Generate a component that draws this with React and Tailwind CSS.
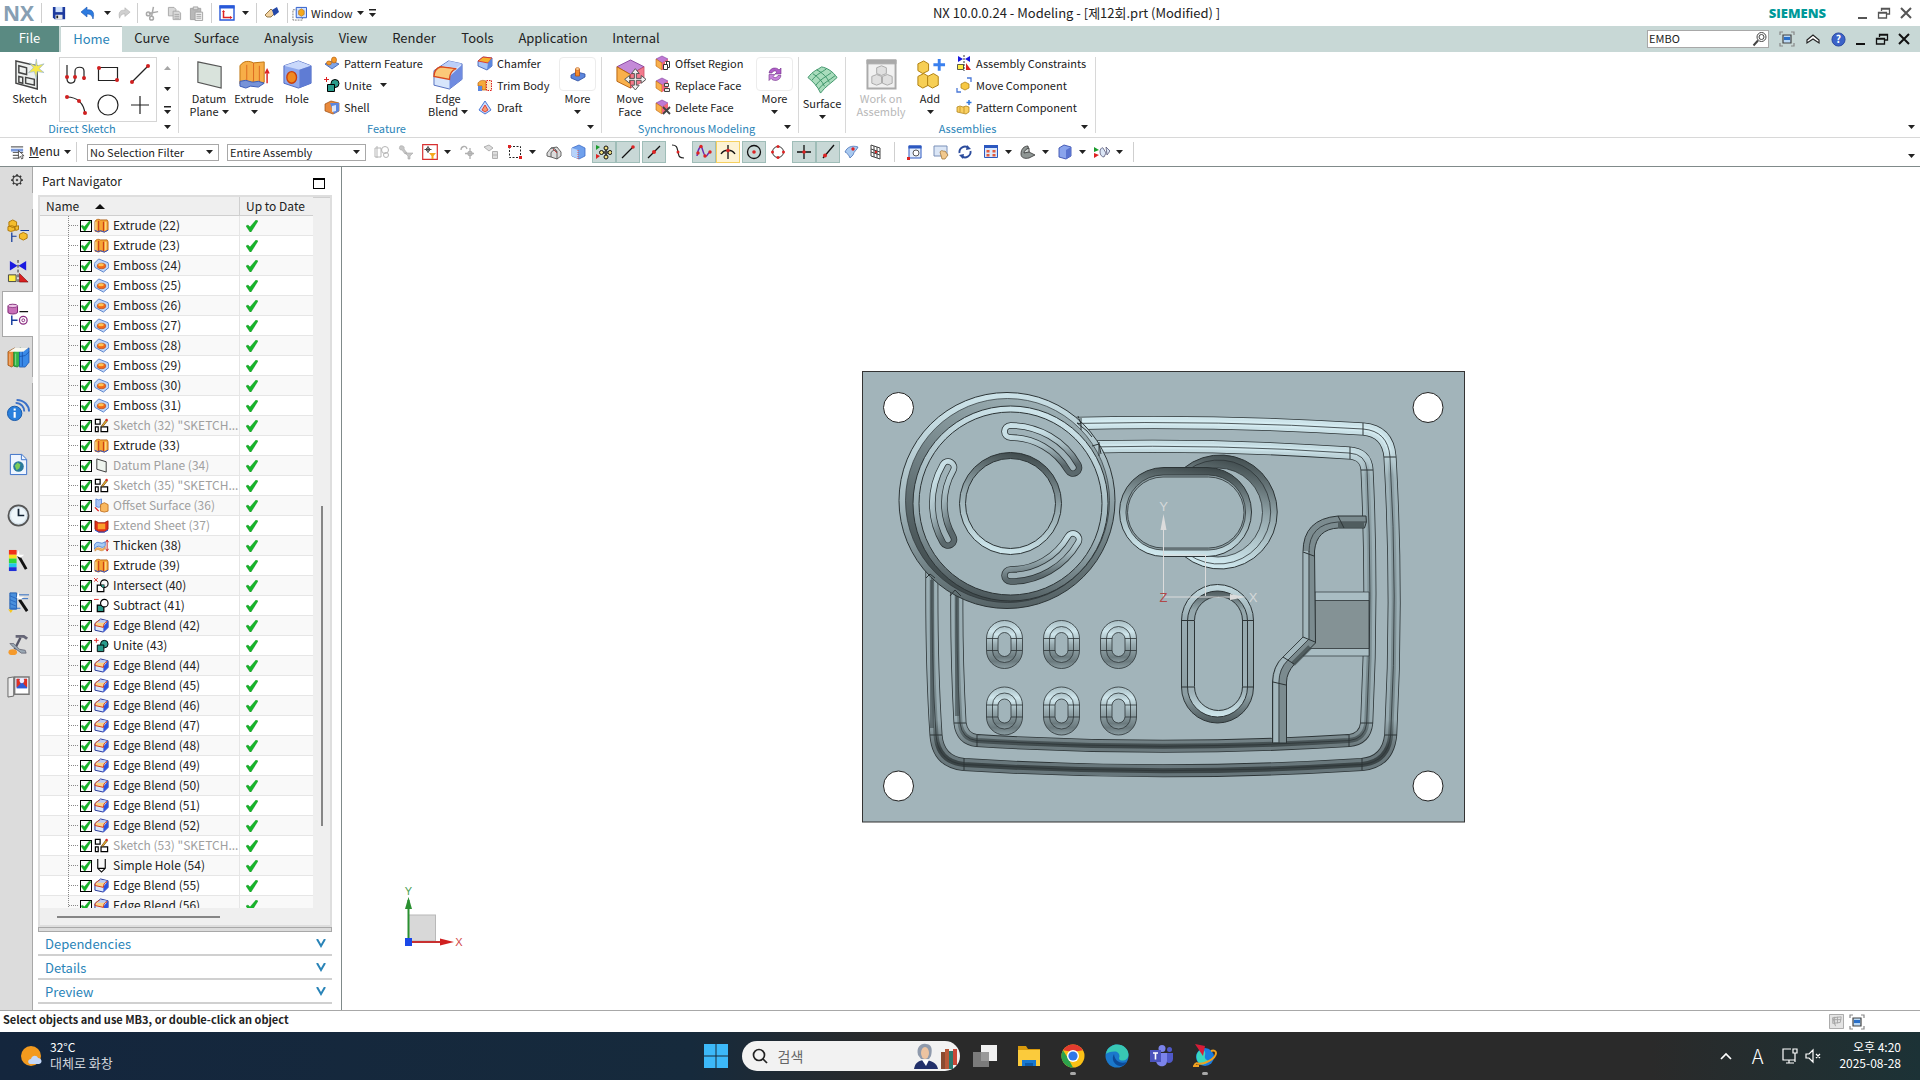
import { Fragment } from 'react'

const BLUE = '#4a78d8'

// 16x16 drawings
const small = {
  save: (
    <>
      <path d="M1 1h14v14H3l-2-2z" fill="#1d3a9e" />
      <path d="M4 1h8v6H4z" fill="#cfe0fa" />
      <path d="M4 10h8v5H4z" fill="#e8e8e8" />
      <path d="M5 11h2v3H5z" fill="#222" />
    </>
  ),
  undo: <path d="M1 7l6-5v3c5-1 8 2 6 9-1-4-3-5-6-5v3z" fill="#2d7be0" stroke="#1c56b0" strokeWidth=".6" />,
  redo: <path d="M15 7L9 2v3C4 4 1 7 3 14c1-4 3-5 6-5v3z" fill="#cfcfcf" stroke="#aaa" strokeWidth=".6" />,
  cut: (
    <g fill="none" stroke="#a9a9a9" strokeWidth="1.6">
      <path d="M9 1L7 11M14 6L4 8" />
      <circle cx="3.5" cy="8.500" r="2" />
      <circle cx="7" cy="13" r="2" />
    </g>
  ),
  copy: (
    <g fill="#d9d9d9" stroke="#a9a9a9">
      <path d="M1.500 1.500h6l2 2v7h-8z" />
      <path d="M6.500 5.500h6l2 2v7h-8z" />
      <path d="M8 9h5M8 11h5M8 13h5" />
    </g>
  ),
  paste: (
    <g stroke="#a3a3a3">
      <path d="M1.500 2.500h11v12h-11z" fill="#b9b9b9" />
      <path d="M4.500 1h5v3h-5z" fill="#ddd" />
      <path d="M6.500 6.500h8v9h-8z" fill="#eee" />
      <path d="M8 9h5M8 11h5M8 13h5" />
    </g>
  ),
  orient: (
    <>
      <path d="M1 1h14v14H1z" fill="#fff" stroke="#2858d8" strokeWidth="1.400" />
      <path d="M.5.5h15v3H.5z" fill="#2858d8" />
      <path d="M4.500 6v6.500H12" fill="none" stroke="#d22" strokeWidth="1.500" />
      <path d="M3 7l1.500-2L6 7zM11 11l2.500 1.500L11 14z" fill="#d22" />
    </>
  ),
  wand: (
    <>
      <path d="M1 10l6-6 4 4-4 4H3z" fill="#f3d3a0" stroke="#7a5a2a" strokeWidth=".8" />
      <path d="M8 5l5-3 2 5-5 4z" fill="#2448a8" />
    </>
  ),
  window: (
    <>
      <path d="M1 4h10v11H1z" fill="none" stroke="#777" strokeDasharray="2 1" />
      <path d="M4.500 1.500h11v11h-11z" fill="#cfe0ff" stroke="#2858c8" />
      <path d="M7 5l3-2 3 2v4l-3 2-3-2z" fill="#f5a81c" stroke="#a8690a" strokeWidth=".6" />
    </>
  ),
  fit: (
    <>
      <path d="M1 4V1h3M12 1h3v3M15 12v3h-3M4 15H1v-3" fill="none" stroke="#888" strokeWidth="1.200" />
      <path d="M4 4h8v8H4z" fill="#b9d8f5" stroke="#444" strokeWidth="1.200" />
      <path d="M5 6h6v3H5z" fill="#2a6fc8" />
    </>
  ),
  help: (
    <>
      <circle cx="8" cy="8" r="7" fill="#3c63c8" stroke="#2a48a0" />
      <text x="8" y="12" textAnchor="middle" fontSize="11" fontWeight="700" fill="#fff">?</text>
    </>
  ),
  up: <path d="M2 9l6-5 6 5v3L8 8l-6 4z" fill="#fff" stroke="#222" strokeWidth="1.200" />,
  min: <path d="M4 12h9v2H4z" fill="currentColor" />,
  restore: (
    <path d="M5.500 6V3.500h8V9H11M2.500 7.500h8V13h-8zM2.500 8h8M5.500 4h8" fill="none" stroke="currentColor" strokeWidth="1.300" />
  ),
  close: <path d="M3 3l10 10M13 3L3 13" stroke="currentColor" strokeWidth="2" />,
  search: (
    <g fill="none" stroke="#444">
      <circle cx="9.500" cy="6" r="4.500" />
      <circle cx="9.500" cy="6" r="2.500" />
      <path d="M6 9.500L1.500 14.500" strokeWidth="2" />
    </g>
  ),
  menu: (
    <>
      <path d="M1 2h13M3 8h11M3 11h8M3 14h7" stroke="#666" strokeWidth="1.200" />
      <path d="M1 4h13v3H1z" fill="#7a98d8" />
      <path d="M9 6v8l2-2 1.500 3 1.500-1-1.500-2.500H15z" fill="#fff" stroke="#333" strokeWidth=".8" />
    </>
  ),
  pattern: (
    <>
      <path d="M1 9l7-3 7 3-7 5z" fill="#7fa4e6" stroke="#3458b0" strokeWidth=".8" />
      <ellipse cx="5" cy="8" rx="2.500" ry="2" fill="#f59a2c" stroke="#b8630e" strokeWidth=".7" />
      <ellipse cx="10" cy="5" rx="2.500" ry="3" fill="#f59a2c" stroke="#b8630e" strokeWidth=".7" />
    </>
  ),
  unite: (
    <>
      <circle cx="11" cy="6.500" r="4" fill="#2a9c8c" stroke="#000" />
      <path d="M3.500 7.500h7v7h-7z" fill="#2a9c8c" stroke="#000" />
      <path d="M2.500 0v5M0 2.500h5" stroke="#d22" />
    </>
  ),
  subtract: (
    <>
      <path d="M3.500 7.500h7v7h-7z" fill="#2a9c8c" stroke="#000" strokeWidth="1.300" />
      <circle cx="11" cy="5.500" r="4" fill="#fff" stroke="#000" strokeWidth="1.200" />
      <path d="M0 1.500h5" stroke="#d22" />
    </>
  ),
  intersect: (
    <>
      <path d="M3.500 7.500h7v7h-7z" fill="#fff" stroke="#000" strokeWidth="1.300" />
      <circle cx="11" cy="6" r="4" fill="none" stroke="#000" strokeWidth="1.200" />
      <path d="M8 7.500h2.500V10C9 10 8 9 8 7.500z" fill="#2a9c8c" />
      <path d="M0 0l4 4M4 0L0 4" stroke="#d22" />
    </>
  ),
  shell: (
    <>
      <path d="M1 5l6-3 8 2v8l-6 3-8-3z" fill="#e98a3c" stroke="#9a4a0e" strokeWidth=".7" />
      <path d="M6 4l9 0v8l-5 3z" fill="#5c86dd" />
      <path d="M8 7l4-1v6l-4 1z" fill="#d9e5fb" />
    </>
  ),
  chamfer: (
    <>
      <path d="M1 6l5-4 9 1v8l-5 4-9-4z" fill="#a8c4f4" stroke="#3458b0" strokeWidth=".8" />
      <path d="M1 6l5-4 9 1-4 5z" fill="#f5b12c" stroke="#d22" strokeWidth=".8" />
      <path d="M11 8l4-5v8l-5 4z" fill="#5c86dd" />
    </>
  ),
  trim: (
    <>
      <path d="M1 6c2-3 5-3 8-2v9H5V9H1z" fill="#f5a83a" stroke="#b8630e" strokeWidth=".7" />
      <path d="M9.500 3.500h5v10h-5z" fill="#fde9c8" stroke="#d22" strokeDasharray="1.500 1" />
      <path d="M1 9h4v5H1z" fill="#5c86dd" />
    </>
  ),
  draft: (
    <>
      <path d="M8 2l6 9-6 4-6-4z" fill="#cddcf8" stroke={BLUE} />
      <path d="M8 6l3 5-3 2-3-2z" fill="#f59a6c" stroke="#d22" strokeWidth=".8" />
    </>
  ),
  boss: (
    <>
      <path d="M1 9l6-3 8 2v3l-7 4-7-3z" fill="#5c86dd" stroke="#2c4ca0" strokeWidth=".8" />
      <path d="M5.500 3h4v7h-4z" fill="#f58a2c" stroke="#b8530e" strokeWidth=".8" />
      <ellipse cx="7.500" cy="3" rx="2" ry="1.500" fill="#fcc88a" stroke="#b8530e" strokeWidth=".5" />
    </>
  ),
  cycle: (
    <>
      <path d="M2 7c1-6 8-6 10-3l2-2v6H8l2-2C8 4 6 5 5 7z" fill="#b05cc8" stroke="#703088" strokeWidth=".6" />
      <path d="M14 9.500c-1 6-8 6-10 3l-2 2v-6h6l-2 2c2 2 4 1 5-1z" fill="#c884dc" stroke="#703088" strokeWidth=".6" />
    </>
  ),
  offsetRegion: (
    <>
      <path d="M1 4l6-3 6 3-6 4z" fill="#c07ad4" stroke="#8040a0" strokeWidth=".6" />
      <path d="M1 4l6 4v7l-6-4z" fill="#f9b04c" stroke="#b8630e" strokeWidth=".6" />
      <path d="M7 8l6-4v3h-3v7l-3 1z" fill="#f2667a" />
      <path d="M8.500 9.500h4v5h-4zM11.500 7v2M10.500 6.500h4v6h-2" fill="#fff" stroke="#333" />
    </>
  ),
  replaceFace: (
    <>
      <path d="M1 4l6-3 6 3-6 4z" fill="#c07ad4" stroke="#8040a0" strokeWidth=".6" />
      <path d="M1 4l6 4v7l-6-4z" fill="#f9b04c" stroke="#b8630e" strokeWidth=".6" />
      <path d="M7 8l6-4v8l-6 3z" fill="#f2667a" />
      <path d="M9.500 6.500h4v3h-4zM9.500 11.500h5v3h-5z" fill="#eee" stroke="#444" />
    </>
  ),
  deleteFace: (
    <>
      <path d="M1 4l6-3 6 3-6 4z" fill="#c07ad4" stroke="#8040a0" strokeWidth=".6" />
      <path d="M1 4l6 4v7l-6-4z" fill="#f9b04c" stroke="#b8630e" strokeWidth=".6" />
      <path d="M7 8l6-4v8l-6 3z" fill="#f2667a" />
      <path d="M8 8l7 7M15 8l-7 7" stroke="#444" strokeWidth="1.800" />
    </>
  ),
  constraints: (
    <>
      <path d="M2 1l5 3-5 3zM14 1L9 4l5 3z" fill="#1a1ae0" />
      <path d="M1.500 9.500h6v5h-6z" fill="#ffee44" stroke="#333" strokeWidth=".8" />
      <path d="M10 8l5 7h-5z" fill="#d82020" />
      <path d="M8 0v16" stroke="#333" strokeDasharray="2 1" />
    </>
  ),
  moveComp: (
    <>
      <path d="M5 7l4-2 4 2v4l-4 2-4-2z" fill="#f7c843" stroke="#a8780a" strokeWidth=".7" />
      <path d="M11 1h4v4M1 11v4h4" fill="none" stroke={BLUE} strokeWidth="1.300" />
    </>
  ),
  patternComp: (
    <>
      <path d="M1 8l3-1 3 1 3-1 3 1v5l-3 2-9-2z" fill="#f9cf62" stroke="#a8780a" strokeWidth=".7" />
      <path d="M4 8v5M8 8v6" stroke="#a8780a" strokeWidth=".6" />
      <path d="M13 1v5M10.500 3.500h5" stroke="#2f78e0" strokeWidth="1.500" />
    </>
  ),
  // part navigator
  extrude: (
    <>
      <path d="M1 4c1-3 4-3 6-2l7 0 1 2v9l-4 2-4-1-2 1-4-1z" fill="#f7a535" stroke="#a85408" strokeWidth=".8" />
      <path d="M5 3v11M10 4v10" stroke="#c22d10" strokeWidth="1" />
      <path d="M2 4v9M12.500 4v9" stroke="#fbd98c" strokeWidth="1.400" />
      <path d="M1 13l3 1.500 3-1 4 1.500 4-2" fill="none" stroke="#2b50d0" />
    </>
  ),
  emboss: (
    <>
      <path d="M0 6L5 1l10 4 1 5-6 5L1 10z" fill="#c3d9f9" stroke="#4472c4" strokeWidth=".9" />
      <ellipse cx="8" cy="8.500" rx="4.500" ry="3" fill="#f26a1b" stroke="#a83808" strokeWidth=".6" />
      <ellipse cx="7.500" cy="7.200" rx="3" ry="1.700" fill="#ffc050" />
    </>
  ),
  sketch: (
    <>
      <path d="M1.500 1.500h5v5h-5zM1.500 9.500h3v5h-3zM7.500 9.500h7v5h-7z" fill="#fff" stroke="#000" strokeWidth="1.300" />
      <path d="M8 8.500l5-7 1.500 1.500-5 6z" fill="#f5b12c" stroke="#5a3a0a" strokeWidth=".7" />
      <circle cx="13.500" cy="2" r="1.200" fill="#d22" />
    </>
  ),
  plane: <path d="M3 1l10 3v11L3 12z" fill="#eef4ee" stroke="#333" />,
  offsetSurface: (
    <>
      <path d="M2 1l3 1 3-1v8l-3 1-3-1z" fill="#a8c4f4" stroke={BLUE} strokeWidth=".8" />
      <path d="M7 7l4-2 4 2v7l-4 1-4-1z" fill="#f9b860" stroke="#b8630e" strokeWidth=".8" />
      <path d="M1 10l4 4" stroke="#d22" strokeWidth="1.500" />
    </>
  ),
  extendSheet: (
    <>
      <path d="M1 3l4 2h6l4-2v9l-4 3H5l-4-3z" fill="#e23018" stroke="#8a1408" strokeWidth=".8" />
      <path d="M4 6h8v6H4z" fill="#f9a02c" />
      <path d="M1 13l4 2h6l4-2" fill="none" stroke="#2b50d0" />
    </>
  ),
  thicken: (
    <>
      <path d="M0 9c1-4 3-5 6-4s4 0 6-1v4c-2 3-4 2-6 1S2 10 0 12z" fill="#a8ccf4" stroke="#3468c8" strokeWidth=".8" />
      <path d="M1 12c2-2 4-2 6-1s3 1 5-2v2c-2 3-4 3-6 2s-3-1-5 1z" fill="#f9b860" stroke="#b8630e" strokeWidth=".5" />
      <path d="M14 3v10M12.500 4.500L14 2l1.500 2.500M12.500 11.500L14 14l1.500-2.500" fill="none" stroke="#c22" />
    </>
  ),
  blend: (
    <>
      <path d="M1 6l6-5 8 2v7l-5 5-9-2z" fill="#dfe9fb" stroke="#1d2f98" />
      <path d="M10 9l5-6v7l-5 5z" fill="#2f55e0" />
      <path d="M1 8c0-3 2-4 4-5l9 1c-3 1-4 3-4 6z" fill="#fbd58a" stroke="#d0341a" />
      <path d="M2 6l5-4 7 1-3 2-7 0z" fill="#b8ccf6" />
    </>
  ),
  hole: <path d="M4 1v10l4 4 4-4V1M4 11h8" fill="none" stroke="#000" strokeWidth="1.200" />,
  // selection bar
  t1: <g fill="none" stroke="#b5b5b5"><path d="M3 2v12M1 4h6v9H1z" /><circle cx="11" cy="6" r="3.500" /><circle cx="12" cy="11" r="2.500" /></g>,
  t2: <g fill="#c6c6c6" stroke="#aaa" strokeWidth=".6"><path d="M2 2c3-1 5 1 4 3l3 4-2 1-3-4C1 6 1 4 2 2zM7 9h8l-3 3v3h-2v-3z" /></g>,
  t3: (
    <>
      <path d="M.7.700h14.600v14.600H.7z" fill="#fff" stroke="#d83030" strokeWidth="1.200" />
      <path d="M6 2v7M2.500 5.500h7" stroke="#444" />
      <circle cx="6" cy="5.500" r="1.800" fill="none" stroke="#444" />
      <path d="M7 9h7l-2.500 3v3h-2v-3z" fill="#f5a81c" />
    </>
  ),
  t4: <g fill="none" stroke="#b0b0b0" strokeWidth="1.300"><path d="M2 6c0-4 5-5 6-1M11 4v11M6 9.500h9" /><circle cx="11" cy="9.500" r="2" /></g>,
  t5: <g fill="#ddd" stroke="#b0b0b0"><path d="M1 3l5-2 4 3-4 3zM9.500 7.500h5v7h-5zM9.500 11h5" /></g>,
  t6: (
    <>
      <path d="M2.500 2.500h11v11h-11z" fill="none" stroke="#222" strokeDasharray="2 1.500" />
      <path d="M1 1h3v3H1zM12 12h3v3h-3z" fill="#d22" />
    </>
  ),
  t7: <g stroke="#555" strokeWidth=".9"><path d="M1 9l4-5 6-1 4 5v4l-4 3-3-1-3-1-4-1z" fill="#dcdcdc" /><path d="M5 13V9c1-3 5-4 6-1v7M5 4c3 0 5 1 6 4" fill="none" /><path d="M7 5l4 4" stroke="#c33" /></g>,
  t8: <g><path d="M2 4l7-3 6 3v8l-6 3-7-3z" fill="#6fa0ec" stroke="#3e6cc8" strokeWidth=".8" /><path d="M2 4l6 2v9l-6-3z" fill="#b6d2fa" /><path d="M8 6v9" stroke="#e05050" strokeDasharray="1 1" /></g>,
  t9: (
    <>
      <path d="M0 1l4 2-4 3z" fill="#1a9c2c" /><path d="M0 10l4 2-4 3z" fill="#d22" />
      <path d="M10 3v11M4.500 8.500h11" stroke="#111" strokeWidth="1.500" />
      <g fill="#f0e080" stroke="#111"><circle cx="10" cy="4" r="2" /><circle cx="10" cy="13" r="2" /><circle cx="5.500" cy="8.500" r="2" /><circle cx="14" cy="8.500" r="2" /></g>
      <circle cx="10" cy="8.500" r="2" fill="#444" />
    </>
  ),
  t10: <g><path d="M2 14L13 3" stroke="#111" strokeWidth="1.300" /><circle cx="13" cy="3" r="1.800" fill="#d22" /></g>,
  t11: <g><path d="M2 14L14 2" stroke="#111" strokeWidth="1.300" /><circle cx="8" cy="8" r="2" fill="#d22" /></g>,
  t12: <g><path d="M2 1c6 0 5 4 6 7s0 6 6 6" fill="none" stroke="#222" strokeWidth="1.200" /><circle cx="8" cy="8" r="1.500" fill="#d22" /></g>,
  t13: <g><path d="M1 12C2 4 5 1 6 4s2 8 4 8 2-5 5-4" fill="none" stroke="#6a2ab0" strokeWidth="1.500" /><g fill="#d22"><circle cx="2" cy="9" r="1.700" /><circle cx="5" cy="2.500" r="1.700" /><circle cx="9" cy="12" r="1.700" /><circle cx="14" cy="8" r="1.700" /></g></g>,
  t14: <g fill="none" stroke="#111" strokeWidth="1.300"><path d="M1 10c3-5 11-5 14 0M8 1v14" /><circle cx="8" cy="6.500" r="1.800" fill="#d22" stroke="none" /></g>,
  t15: <g><circle cx="8" cy="8" r="6.500" fill="none" stroke="#111" strokeWidth="1.300" /><circle cx="8" cy="8" r="1.800" fill="#d22" /></g>,
  t16: <g><circle cx="8" cy="8" r="5.500" fill="none" stroke="#333" /><g fill="#d22"><circle cx="8" cy="2.500" r="1.500" /><circle cx="8" cy="13.500" r="1.500" /><circle cx="2.500" cy="8" r="1.500" /><circle cx="13.500" cy="8" r="1.500" /></g></g>,
  t17: <g><path d="M8 1v14M1 8h14" stroke="#111" strokeWidth="1.300" /><circle cx="8" cy="8" r="1.800" fill="#d22" /></g>,
  t18: <g><path d="M3 14L14 1" stroke="#111" strokeWidth="1.300" /><circle cx="5" cy="11.500" r="2" fill="#d22" /></g>,
  t19: <g><path d="M1 8c2-5 7-7 13-5-1 3-4 4-5 8l-3 3c-1-3-3-5-5-6z" fill="#a9c9f0" stroke="#4a74b8" strokeWidth=".8" /><circle cx="9" cy="5" r="1.700" fill="#d22" /></g>,
  t20: <g fill="none" stroke="#444"><path d="M3 1l9 3v11l-9-3zM6 2v11M9 3v11M3 5l9 3M3 8l9 3" /><circle cx="8" cy="8" r="1.200" fill="#d22" stroke="none" /></g>,
  t21: <g><path d="M2 2h12v12H2z" fill="#e4eefc" stroke="#2c58c0" /><path d="M1.500 1.500h13v3h-13z" fill="#2c58c0" /><circle cx="9" cy="9" r="3" fill="#fff" stroke="#555" /><path d="M0 13h3v3H0z" fill="#d22" /></g>,
  t22: <g><path d="M1 2h13v10H1z" fill="#dbe6f6" stroke="#7a90b8" /><path d="M7 8c2-3 3 0 5-1l3 4-3 4H9z" fill="#f2c98e" stroke="#9a6c2a" strokeWidth=".7" /></g>,
  t23: <g fill="none" stroke="#2c4c9c" strokeWidth="1.900"><path d="M2.500 9a5.500 5.500 0 0 1 9-5M13.500 7a5.500 5.500 0 0 1-9 5" /><path d="M10 1l4 4-5 1zM6 15l-4-4 5-1z" fill="#2c4c9c" stroke="none" /></g>,
  t24: <g><path d="M1.500 2.500h13v11h-13z" fill="#dce8fa" stroke="#2c58c0" /><path d="M1 1h14v3H1z" fill="#2c58c0" /><path d="M3.500 6h3v2.500h-3zM9.500 6h3v2.500h-3zM3.500 10h3v2.500h-3zM9.500 10h3v2.500h-3z" fill="#e25a3c" /></g>,
  t25: <g stroke="#333" strokeWidth=".8"><path d="M1 10c0-5 3-8 7-8l1 6 6 3-6 3c-4 1-8 0-8-4z" fill="#8f9694" /><path d="M4 9c0-2 2-4 5-5v4z" fill="#cfd5d3" /></g>,
  t26: <g><path d="M2 4l5-3 7 2v9l-5 3-7-2z" fill="#8aa4ec" stroke="#3a50b0" strokeWidth=".9" /><path d="M9 6l5-3v9l-5 3z" fill="#5a74d0" /></g>,
  t27: <g><path d="M0 3l5 3-5 2z" fill="#1a9c2c" /><path d="M0 9l5 2-5 3z" fill="#d22" /><path d="M6 8c0-3 2-5 3-4l3 5-2 4c-2 0-4-2-4-5zM12 3l4 4-3 4z" fill="#dbe6f6" stroke="#557" strokeWidth=".8" /></g>,
  flag: <g fill="#e4e4e4" stroke="#a5a5a5"><path d="M.5.500h15v15H.5z" /><path d="M4 4l9-1-1 6-8 1zM6 3v8M9 3v7M4 6h9M4 4l3 9" fill="none" /></g>,
}

// 32x32 drawings
const big = {
  sketch: (
    <g fill="none" stroke="#444" strokeWidth="1.500">
      <path d="M2 2l22 5v24L2 25z" fill="#eef1ef" />
      <path d="M5 7l8 2v7l-8-2zM5 18l4 1v6l-4-1zM12 19l9 2v6l-9-2z" />
      <path d="M23 0l1 7 7-2-5 5 5 4-7-1-1 7-2-7-6 1 5-5-4-5 6 3z" fill="#f7e94a" stroke="#98b8d0" strokeWidth=".7" />
    </g>
  ),
  plane: <path d="M4 3l24 5v22L4 24z" fill="#d9e3dc" stroke="#555" strokeWidth="1.200" />,
  extrude: (
    <>
      <path d="M1 7c4-6 10-5 14-3l11-1v21l-6 2-6-3-3 4-10-1z" fill="#f7ae48" stroke="#c07510" />
      <path d="M15 4v19M8 6v21M21 7v18" stroke="#dc6a20" />
      <path d="M1 23l6-1 7 2 6-1 6 2-6 4-8-1-5 2-6-2z" fill="#7793d8" stroke="#3c5cb8" />
      <path d="M29 25V13M27 15l2-4 2 4" fill="none" stroke="#d22" strokeWidth="1.500" />
    </>
  ),
  hole: (
    <>
      <path d="M2 7l15-5 13 5v18l-13 5-15-5z" fill="#8fa8ec" stroke="#4d68c0" />
      <path d="M2 7l15-5 13 5-12 4z" fill="#c9d8fb" />
      <path d="M18 11l12-4v18l-12 5z" fill="#5f7cd4" />
      <ellipse cx="10" cy="19" rx="5" ry="6" fill="#f08a20" stroke="#c8400e" strokeWidth="1.400" />
    </>
  ),
  blend: (
    <>
      <path d="M1 12L16 2l14 3v16L17 31 1 27z" fill="#d7e5fb" stroke="#5570c0" />
      <path d="M17 18L30 6v15L17 31z" fill="#6f8be0" />
      <path d="M1 18c0-7 4-9 7-10l16 2c-5 2-7 5-7 11z" fill="#fbc878" stroke="#d9481c" strokeWidth="1.400" />
      <path d="M9 7l8-5 13 3-6 4z" fill="#bccff8" />
    </>
  ),
  move: (
    <>
      <path d="M2 8L16 1l14 7-14 8z" fill="#c48ad8" stroke="#8a4aa4" />
      <path d="M2 8l14 8v14L2 23z" fill="#f9b04c" stroke="#b8630e" />
      <path d="M16 16l14-8v15l-14 7z" fill="#f27a8c" stroke="#b83850" strokeWidth=".6" />
      <path d="M21 10l4 5h-3v5h5v-3l5 4-5 4v-3h-5v5h3l-4 5-4-5h3v-5h-5v3l-5-4 5-4v3h5v-5h-3z" fill="#f2f2f2" stroke="#555" />
    </>
  ),
  surface: (
    <>
      <path d="M1 14c5-7 10-8 14-11 6 1 12 5 16 11-5 5-12 9-17 16-3-7-8-12-13-16z" fill="#a9dcbc" stroke="#3c9468" />
      <path d="M5 17C10 10 15 9 20 5M9 22c4-6 11-9 16-13M12 26c4-6 11-9 17-14M6 10c5 3 10 8 12 13M10 6c6 3 11 8 13 13" fill="none" stroke="#3c9468" />
    </>
  ),
  work: (
    <g stroke="#aaa">
      <path d="M1.500 1.500h29v29h-29z" fill="#f1f1f1" strokeWidth="2" />
      <path d="M1 1h30v4H1z" fill="#aaa" />
      <path d="M11 9l5-2 5 2v6l-5 2-5-2zM6 18l5-2 5 2v7l-5 2-5-2zM17 18l5-2 5 2v7l-5 2-5-2z" fill="#e0e0e0" />
    </g>
  ),
  add: (
    <>
      <g fill="#f7cf55" stroke="#b08010">
        <path d="M3 5l6-3 5 3v7l-6 3-5-3zM3 18l6-3 5 3v9l-6 3-5-3z" />
        <path d="M13 18l6-3 5 3v9l-6 3-5-3z" />
      </g>
      <path d="M25 0v12M19 6h12" stroke="#3a80ee" strokeWidth="3" />
    </>
  ),
}

// 24x24 drawings for the resource bar
const rail = {
  gear: <g fill="none" stroke="#333"><circle cx="12" cy="12" r="7" strokeWidth="2" /><circle cx="12" cy="12" r="1.500" fill="#333" /><path d="M12 5V2M12 22v-3M5 12H2M22 12h-3M7 7L5 5M19 19l-2-2M7 17l-2 2M17 7l2-2" strokeWidth="3" /></g>,
  assembly: <g><g fill="#f5bd2c" stroke="#b07808"><path d="M2 3l4-2 4 2v4l-4 2-4-2zM1 8l4-1 3 1v4l-4 1-3-1zM8 8l4-1v4l-3 1z" /><path d="M13 16l4-2 4 2v4l-4 2-4-2z" /></g><path d="M5 14v10M5 18h5M14 12h9" stroke="#123a9c" strokeWidth="1.300" /></g>,
  constraints: <g><path d="M3 1l8 5-8 5zM20 1l-8 5 8 5z" fill="#1a1ae0" /><path d="M1.500 15.500h8v7h-8z" fill="#ffee44" stroke="#444" /><path d="M13 14l9 9h-9z" fill="#d82020" stroke="#700" strokeWidth=".6" /><path d="M11.500 0v24" stroke="#222" strokeDasharray="3 2" /></g>,
  part: <g><path d="M1 3c2-2 8-2 10 0v7c-2 2-8 2-10 0z" fill="#c870b8" stroke="#7a2070" /><ellipse cx="6" cy="3" rx="5" ry="1.800" fill="#ecc4e6" stroke="#7a2070" strokeWidth=".7" /><path d="M13 9h9" stroke="#111" strokeWidth="1.300" /><path d="M5 13v10M5 18h6" stroke="#123a9c" strokeWidth="1.500" /><circle cx="17" cy="18" r="4" fill="none" stroke="#8a2a80" strokeWidth="1.300" /><circle cx="17" cy="18" r="1.500" fill="none" stroke="#8a2a80" /></g>,
  books: <g strokeWidth=".7"><path d="M1 6l7-4v17l-3 3-4-2z" fill="#e8893a" stroke="#8a4408" /><path d="M7 6l7-4v17l-3 3-4-1z" fill="#34b848" stroke="#0e6a1e" /><path d="M13 6l10-4v15l-4 5-6 0z" fill="#3a8ae8" stroke="#1048a0" /><path d="M2 6l6-4h14l-5 4z" fill="#f8f8f0" /><path d="M3 8v12M9 8v12" stroke="#fff" opacity=".6" /><path d="M16 6v15M13 11l6-1 4-4" fill="none" stroke="#1048a0" /></g>,
  info: <g><circle cx="8" cy="15" r="7.500" fill="#2a80dc" stroke="#1858a8" /><path d="M8 13.500v6M8 10v2" stroke="#fff" strokeWidth="2.200" /><path d="M9 4c6 0 9 5 9 9M10 1c8 0 13 6 13 12" fill="none" stroke="#3a70c8" strokeWidth="2" /></g>,
  page: <g><path d="M3.500 1.500h12l5 5v16h-17z" fill="#eef5ff" stroke="#3a70c8" /><path d="M15 2v5h5" fill="none" stroke="#3a70c8" /><circle cx="12" cy="14" r="5.500" fill="#2a7a9c" /><path d="M8 13l3-3 3 2-1 4-3 2z" fill="#7acc5a" /></g>,
  clock: <g><circle cx="12" cy="12" r="10.500" fill="#d8e4ec" stroke="#555" strokeWidth="1.800" /><circle cx="12" cy="12" r="8" fill="#eef6fa" /><path d="M12 5v7h6" fill="none" stroke="#123" strokeWidth="1.800" /></g>,
  rainbow: <g><path d="M2 1h8v5H2z" fill="#f03018" /><path d="M2 6h8v4H2z" fill="#f7e020" /><path d="M2 10h8v5H2z" fill="#30d838" /><path d="M2 15h8v4H2z" fill="#20c8e8" /><path d="M2 19h8v4H2z" fill="#2030d8" /><path d="M12 7l8 14" stroke="#111" strokeWidth="3" /><path d="M12 1l1 5 5 0-4 3-4-2z" fill="#fff" /></g>,
  coil: <g><path d="M3 2h7v17H3z" fill="#4a90dc" stroke="#2460b0" /><path d="M3 5l7 3M3 9l7 3M3 13l7 3M12 4h11M12 8h10M4 18h10" stroke="#2a68c0" /><path d="M13 9l8 12" stroke="#111" strokeWidth="3" /><path d="M12 1l1 5 5 0-4 3-4-2z" fill="#fff" /><path d="M1 19l5 1-2 3z" fill="#f7c820" /></g>,
  tools: <g><path d="M9 2h9l4 3-2 2-3-2H9z" fill="#667" /><path d="M14 5L8 17" stroke="#556" strokeWidth="2.500" /><path d="M3 11l4 4 8 6 5 0-1-3-6-1-6-6z" fill="#9aa8b4" stroke="#556" strokeWidth=".7" /><ellipse cx="6" cy="20" rx="4.500" ry="3" fill="#f59a2c" /></g>,
  roles: <g><path d="M1 3l6-1v20l-6 1z" fill="#eee" stroke="#666" /><path d="M8 2h15v18H8z" fill="#fff" stroke="#777" strokeWidth="1.500" /><path d="M10 4h11v10H10z" fill="#2f5cd8" /><path d="M10 4h3l1 5-4 4zM21 4h-3l-1 5 4 4z" fill="#e03020" /><circle cx="15.500" cy="6" r="2.500" fill="#eef" /></g>,
}

function Icon({ name, size = 'h-4 w-4', className = '' }) {
  return (
    <svg viewBox="0 0 16 16" className={`shrink-0 ${size} ${className}`} aria-hidden="true">
      {small[name]}
    </svg>
  )
}

function Caret({ className = '' }) {
  return (
    <svg viewBox="0 0 7 4" className={`h-1 w-[7px] shrink-0 ${className}`} aria-hidden="true">
      <path d="M0 0h7L3.500 4z" fill="#222" />
    </svg>
  )
}

function Overflow() {
  return (
    <svg viewBox="0 0 8 8" className="h-2 w-2 shrink-0" aria-hidden="true">
      <path d="M1 0h7v1.500H1zM1 4h7L4.500 8z" fill="#222" />
    </svg>
  )
}

function Sep() {
  return <span className="block h-5 w-px shrink-0 bg-[#cfcfcf]" />
}

function WindowButtons({ className }) {
  return (
    <div className={`flex items-center gap-1.5 ${className}`}>
      {['min', 'restore', 'close'].map((n) => (
        <button key={n} type="button" aria-label={n}>
          <Icon name={n} />
        </button>
      ))}
    </div>
  )
}

function TitleBar() {
  return (
    <header className="grid h-[26px] shrink-0 grid-cols-[1fr_auto_0.75fr] items-center bg-white">
      <div className="flex items-center">
        <span className="w-[41px] pl-[3px] font-['Open_Sans',sans-serif] text-[21px] leading-6 font-bold text-[#879fb3]">NX</span>
        <Sep />
        <button type="button" aria-label="Save" className="ml-2.5"><Icon name="save" size="h-[14px] w-[14px]" /></button>
        <button type="button" aria-label="Undo" className="ml-[14px]"><Icon name="undo" /></button>
        <Caret className="ml-2" />
        <button type="button" aria-label="Redo" className="ml-1.5"><Icon name="redo" size="h-[14px] w-[14px]" /></button>
        <span className="ml-1.5 flex items-center gap-[7px]">
          <Sep />
          <button type="button" aria-label="Cut"><Icon name="cut" size="h-[15px] w-[15px]" /></button>
          <button type="button" aria-label="Copy"><Icon name="copy" size="h-[15px] w-[15px]" /></button>
          <button type="button" aria-label="Paste"><Icon name="paste" size="h-[15px] w-[15px]" /></button>
          <Sep />
          <button type="button" aria-label="Orient"><Icon name="orient" /></button>
          <Caret />
          <Sep />
          <button type="button" aria-label="Touch"><Icon name="wand" /></button>
          <Sep />
        </span>
        <button type="button" className="ml-1 flex items-center gap-1">
          <Icon name="window" size="h-[15px] w-[15px]" />
          Window
          <Caret />
        </button>
        <span className="ml-1"><Overflow /></span>
      </div>
      <h1 className="text-[13px]">NX 10.0.0.24 - Modeling - [제12회.prt (Modified) ]</h1>
      <div className="flex items-center justify-end">
        <span className="font-['Open_Sans',sans-serif] text-[13px] font-extrabold text-[#009999]">SIEMENS</span>
        <WindowButtons className="ml-7 pr-1.5 text-[#555]" />
      </div>
    </header>
  )
}

const TABS = [
  ['Curve', 'w-[60px]'],
  ['Surface', 'w-[69px]'],
  ['Analysis', 'w-[76px]'],
  ['View', 'w-[52px]'],
  ['Render', 'w-[70px]'],
  ['Tools', 'w-[57px]'],
  ['Application', 'w-[94px]'],
  ['Internal', 'w-[72px]'],
]

function TabBar() {
  return (
    <nav className="flex h-[26px] shrink-0 items-stretch bg-[#c8d8d6] text-[13px]">
      <button type="button" className="w-[59px] bg-[#5a8a82] pb-0.5 text-white">File</button>
      <button type="button" className="ml-0.5 w-[61px] border-t border-[#a0a8a8] bg-white pb-0.5 text-[#2a84b8]">Home</button>
      {TABS.map(([label, w]) => (
        <button key={label} type="button" className={`pb-0.5 ${w}`}>{label}</button>
      ))}
      <div className="ml-auto flex items-center">
        <label className="flex h-[18px] w-[122px] items-center border border-[#a8a8a8] bg-white">
          <input aria-label="Command Finder" defaultValue="EMBO" className="min-w-0 flex-1 pb-0.5 pl-px text-[11px] outline-none" />
          <Icon name="search" />
        </label>
        <button type="button" aria-label="Full screen" className="ml-2.5"><Icon name="fit" /></button>
        <button type="button" aria-label="Minimize ribbon" className="ml-2.5"><Icon name="up" /></button>
        <button type="button" aria-label="Help" className="ml-2.5"><Icon name="help" size="h-[15px] w-[15px]" /></button>
        <WindowButtons className="ml-1.5 pr-2 text-[#111]" />
      </div>
    </nav>
  )
}

function BigButton({ icon, lines, width, caret, disabled }) {
  return (
    <button type="button" className={`flex shrink-0 flex-col items-center leading-[13px] whitespace-nowrap ${width} ${disabled ? 'text-[#b8b8b8]' : ''}`}>
      <span className="flex h-10 items-center pt-1">
        <svg viewBox="0 0 32 32" className="h-[31px] w-[31px]" aria-hidden="true">{big[icon]}</svg>
      </span>
      {lines.map((l, i) => (
        <span key={l} className="flex items-center gap-[3px]">
          {l}
          {caret === 'inline' && i === lines.length - 1 && <Caret />}
        </span>
      ))}
      {caret === 'below' && <Caret className="mt-[5px]" />}
    </button>
  )
}

function MoreButton({ icon }) {
  return (
    <button type="button" className="flex w-[37px] shrink-0 flex-col items-center leading-[13px]">
      <span className="mt-[5px] mb-px flex h-[34px] w-[37px] items-center justify-center rounded border border-[#ececec]">
        <Icon name={icon} />
      </span>
      More
      <Caret className="mt-[5px]" />
    </button>
  )
}

function SmallList({ items, className }) {
  return (
    <div className={`flex shrink-0 flex-col ${className}`}>
      {items.map(([icon, label, caret]) => (
        <button key={label} type="button" className="flex h-[22px] items-center gap-1 whitespace-nowrap">
          <Icon name={icon} />
          {label}
          {caret && <Caret className="ml-1" />}
        </button>
      ))}
    </div>
  )
}

function Group({ label, children, className = '' }) {
  return (
    <section className="flex shrink-0">
      <div className={`flex flex-col ${className}`}>
        <div className="flex h-[69px]">{children}</div>
        {label && (
          <div className="flex h-4 items-center pb-0.5">
            <span className="flex-1 text-center text-[#2a84b8]">{label}</span>
            <span className="flex w-[14px] pb-0.5"><Caret /></span>
          </div>
        )}
      </div>
      <span className="mt-[5px] h-[76px] w-px bg-[#d8d8d8]" />
    </section>
  )
}

const dot = (cx, cy) => <circle cx={cx} cy={cy} r="2" fill="#d02020" stroke="none" />
const CURVES = [
  ['Profile', <><path d="M3 3v14c0 6 8 5 8 0V9c0-5 9-5 9 0v9" />{dot(3, 15)}{dot(11, 15)}{dot(20, 16)}</>],
  ['Rectangle', <><path d="M2.500 5.500h19v13h-19z" />{dot(3, 6)}{dot(21, 18)}</>],
  ['Line', <><path d="M4 20L20 4" />{dot(4, 20)}{dot(20, 4)}</>],
  ['Arc', <><path d="M3 4c10 0 17 6 18 17" />{dot(3, 4)}{dot(15, 8)}{dot(21, 20)}</>],
  ['Circle', <circle cx="12" cy="12" r="10" />],
  ['Point', <path d="M12 3v18M3 12h18" />],
]

function Gallery() {
  return (
    <>
      <div className="mt-[5px] grid h-[65px] w-[98px] grid-cols-3 place-items-center border border-[#d5d5d5]">
        {CURVES.map(([name, art]) => (
          <button key={name} type="button" aria-label={name}>
            <svg viewBox="0 0 24 24" className="h-6 w-6" fill="none" stroke="#222" strokeWidth="1.200">{art}</svg>
          </button>
        ))}
      </div>
      <div className="flex w-5 flex-col items-center pt-[14px]">
        <Caret className="rotate-180 opacity-40" />
        <Caret className="mt-[17px] mb-[15px]" />
        <Overflow />
      </div>
    </>
  )
}

function Ribbon() {
  return (
    <div className="flex h-[86px] shrink-0 border-b border-[#d8d8d8] bg-white">
      <Group label="Direct Sketch" className="w-[178px]">
        <BigButton icon="sketch" lines={['Sketch']} width="w-[59px]" />
        <Gallery />
      </Group>
      <Group label="Feature" className="w-[422px] pl-[7px]">
        <BigButton icon="plane" lines={['Datum', 'Plane']} width="w-[46px]" caret="inline" />
        <BigButton icon="extrude" lines={['Extrude']} width="w-11" caret="below" />
        <BigButton icon="hole" lines={['Hole']} width="w-[42px]" />
        <SmallList className="w-[105px] pl-1.5" items={[['pattern', 'Pattern Feature'], ['unite', 'Unite', true], ['shell', 'Shell']]} />
        <BigButton icon="blend" lines={['Edge', 'Blend']} width="w-[50px]" caret="inline" />
        <SmallList className="w-[86px] pl-1" items={[['chamfer', 'Chamfer'], ['trim', 'Trim Body'], ['draft', 'Draft']]} />
        <MoreButton icon="boss" />
      </Group>
      <Group label="Synchronous Modeling" className="w-[196px] pl-[7px]">
        <BigButton icon="move" lines={['Move', 'Face']} width="w-[42px]" />
        <SmallList className="w-[105px] pl-1" items={[['offsetRegion', 'Offset Region'], ['replaceFace', 'Replace Face'], ['deleteFace', 'Delete Face']]} />
        <MoreButton icon="cycle" />
      </Group>
      <Group className="w-[46px] pt-[5px]">
        <BigButton icon="surface" lines={['Surface']} width="w-[46px]" caret="below" />
      </Group>
      <Group label="Assemblies" className="w-[249px] pl-2">
        <BigButton icon="work" lines={['Work on', 'Assembly']} width="w-[54px]" disabled />
        <BigButton icon="add" lines={['Add']} width="w-11" caret="below" />
        <SmallList className="pl-1" items={[['constraints', 'Assembly Constraints'], ['moveComp', 'Move Component'], ['patternComp', 'Pattern Component']]} />
      </Group>
      <span className="ml-auto self-end pr-[5px] pb-2"><Caret /></span>
    </div>
  )
}

// '-' is a drop-down arrow, '|' a separator, '*' a pressed button, '!' the highlighted one
const TOOLS = [
  ['t1'], ['t2'], ['t3'], ['-'], ['t4'], ['t5'], ['t6'], ['-'], ['t7', 'ml-0.5'], ['t8'],
  ['t9', 'ml-0.5', '*'], ['t10', '', '*'], ['t11', 'ml-0.5', '*'], ['t12'], ['t13', 'ml-0.5', '*'],
  ['t14', '', '!'], ['t15', 'ml-0.5', '*'], ['t16'], ['t17', 'ml-0.5', '*'], ['t18', '', '*'], ['t19'], ['t20'],
  ['|', 'ml-1.5'], ['t21', 'ml-2'], ['t22', 'ml-0.5'], ['t23'], ['t24', 'ml-0.5'], ['-'], ['t25'], ['-'],
  ['t26'], ['-'], ['t27'], ['-'], ['|', 'ml-1.5'],
]

function Picker({ label, width }) {
  return (
    <span className={`relative flex h-[17px] shrink-0 items-center border border-[#a8a8a8] ${width}`}>
      <select aria-label={label} className="h-full w-full appearance-none pl-0.5 leading-[15px] outline-none">
        <option>{label}</option>
      </select>
      <Caret className="pointer-events-none absolute right-[5px]" />
    </span>
  )
}

function SelectionBar() {
  return (
    <div className="flex h-[29px] shrink-0 items-center border-b border-[#808a8a] bg-white">
      <button type="button" className="ml-2.5 flex items-center gap-1">
        <Icon name="menu" size="h-[15px] w-[15px]" />
        <span className="pb-0.5 text-[12px]"><u>M</u>enu</span>
        <Caret />
      </button>
      <span className="ml-[5px]"><Sep /></span>
      <span className="ml-2.5 flex gap-2 pr-1">
        <Picker label="No Selection Filter" width="w-[132px]" />
        <Picker label="Entire Assembly" width="w-[139px]" />
      </span>
      {TOOLS.map(([name, gap = '', state], i) => (
        <Fragment key={i}>
          {name === '-' && <Caret className="mr-1 ml-0.5" />}
          {name === '|' && <span className={gap}><Sep /></span>}
          {name.startsWith('t') && (
            <button
              type="button"
              aria-label={name}
              className={`flex h-[22px] w-6 shrink-0 items-center justify-center ${gap} ${
                state === '*' ? 'border border-[#9fbdb8] bg-[#c8d8d6]' : state === '!' ? 'border border-[#f5d060] bg-[#fdf3d4]' : ''
              }`}
            >
              <Icon name={name} />
            </button>
          )}
        </Fragment>
      ))}
      <span className="ml-auto self-end pr-[5px] pb-2"><Caret /></span>
    </div>
  )
}

const RAIL = [
  ['gear', 'h-[26px] pr-1'],
  ['assembly', 'mt-4 h-[42px]'],
  ['constraints', 'h-10'],
  ['part', 'h-[46px]'],
  ['books', 'h-10'],
  ['info', 'mt-1.5 h-[54px]'],
  ['page', 'h-[54px]'],
  ['clock', 'h-12'],
  ['rainbow', 'h-[42px]'],
  ['coil', 'h-[42px]'],
  ['tools', 'h-[42px]'],
  ['roles', 'h-[42px]'],
]

function ResourceBar() {
  return (
    <div className="flex w-[33px] shrink-0 flex-col items-end bg-[#dcdcdc]">
      {RAIL.map(([name, cls]) => (
        <button
          key={name}
          type="button"
          aria-label={name}
          className={`flex shrink-0 items-center justify-center ${cls} ${
            name === 'part' ? 'w-[31px] border border-r-0 border-[#a8a8a8] bg-white' : 'w-8 border-r border-[#a8a8a8] pl-1'
          }`}
        >
          <svg viewBox="0 0 24 24" className={name === 'gear' ? 'h-[14px] w-[14px]' : 'h-[23px] w-[23px]'}>{rail[name]}</svg>
        </button>
      ))}
      <span className="w-px flex-1 bg-[#a8a8a8]" />
    </div>
  )
}

const blend = (n) => ['blend', `Edge Blend (${n})`]
const FEATURES = [
  ['extrude', 'Extrude (22)'],
  ['extrude', 'Extrude (23)'],
  ...[24, 25, 26, 27, 28, 29, 30, 31].map((n) => ['emboss', `Emboss (${n})`]),
  ['sketch', 'Sketch (32) "SKETCH...', true],
  ['extrude', 'Extrude (33)'],
  ['plane', 'Datum Plane (34)', true],
  ['sketch', 'Sketch (35) "SKETCH...', true],
  ['offsetSurface', 'Offset Surface (36)', true],
  ['extendSheet', 'Extend Sheet (37)', true],
  ['thicken', 'Thicken (38)'],
  ['extrude', 'Extrude (39)'],
  ['intersect', 'Intersect (40)'],
  ['subtract', 'Subtract (41)'],
  blend(42),
  ['unite', 'Unite (43)'],
  ...[44, 45, 46, 47, 48, 49, 50, 51, 52].map(blend),
  ['sketch', 'Sketch (53) "SKETCH...', true],
  ['hole', 'Simple Hole (54)'],
  blend(55),
  blend(56),
]

function Check({ className }) {
  return (
    <svg viewBox="0 0 12 12" className={className} aria-hidden="true">
      <path d="M0 6l2-1 2 2 6-7 2 1-7 11H4z" fill="#17b52a" stroke="#0c8a1c" strokeWidth=".4" />
    </svg>
  )
}

function PartNavigator() {
  return (
    <aside className="flex w-[309px] shrink-0 flex-col border-r border-[#808a8a] bg-white pr-[9px] pl-[5px]">
      <div className="flex h-7 shrink-0 items-center justify-between pr-[7px] pl-1 text-[12px]">
        <h2>Part Navigator</h2>
        <button type="button" aria-label="Maximize" className="mt-1 h-[11px] w-3 border border-t-2 border-black" />
      </div>
      <div className="flex min-h-0 flex-1 flex-col border-2 border-[#dedede] bg-[#efefef] text-[12px]">
        <div className="flex min-h-0 flex-1 overflow-hidden">
          <div className="min-w-0 flex-1 overflow-hidden">
            <table className="w-full table-fixed border-separate border-spacing-0 text-left">
              <thead>
                <tr className="h-[19px] bg-[#efefef]">
                  <th className="w-[200px] border-r border-b border-[#cfcfcf] p-0 pl-1.5 font-normal">
                    <span className="flex h-[18px] items-center gap-4">
                      Name
                      <svg viewBox="0 0 10 5" className="h-[5px] w-[10px]"><path d="M0 5h10L5 0z" fill="#111" /></svg>
                    </span>
                  </th>
                  <th className="border-b border-[#cfcfcf] p-0 pl-1.5 font-normal whitespace-nowrap">
                    <span className="flex h-[18px] items-center">Up to Date</span>
                  </th>
                </tr>
              </thead>
              <tbody>
                {FEATURES.map(([icon, label, dim], i) => (
                  <tr key={label} className={i % 2 ? 'bg-white' : 'bg-[#f9f9f9]'}>
                    <td className="border-r border-b border-[#e6e6e6] p-0">
                      <label className={`flex h-[19px] items-center whitespace-nowrap ${dim ? 'text-[#a0a0a0]' : ''}`}>
                        <span className="ml-7 flex h-full w-[10px] shrink-0 items-center border-l border-dotted border-[#888]">
                          <span className="w-full border-t border-dotted border-[#888]" />
                        </span>
                        <span className="ml-0.5 grid shrink-0 place-items-center">
                          <input type="checkbox" defaultChecked className="h-3 w-3 appearance-none border border-black bg-white [grid-area:1/1]" />
                          <Check className="pointer-events-none h-[10px] w-[10px] [grid-area:1/1]" />
                        </span>
                        <Icon name={icon} size="h-[15px] w-[15px]" className="ml-0.5" />
                        <span className="ml-1 pb-0.5">{label}</span>
                      </label>
                    </td>
                    <td className="border-b border-[#e6e6e6] p-0 pl-1.5"><Check className="h-3 w-3" /></td>
                  </tr>
                ))}
              </tbody>
            </table>
          </div>
          <div className="flex w-[17px] shrink-0 justify-center border-t border-[#cfcfcf] pt-[308px]">
            <span className="h-80 w-0.5 bg-[#858585]" />
          </div>
        </div>
        <div className="h-[17px] shrink-0 pt-2 pl-[17px]">
          <div className="h-0.5 w-[163px] bg-[#858585]" />
        </div>
      </div>
      <div className="h-[5px] shrink-0 border border-[#a8a8a8] bg-[#dcdcdc]" />
      {['Dependencies', 'Details', 'Preview'].map((label) => (
        <button key={label} type="button" className="flex h-6 shrink-0 items-center justify-between border-b-2 border-[#d0d0d0] pt-px pr-1.5 pl-[7px] text-[13px] text-[#2a84b8]">
          {label}
          <svg viewBox="0 0 10 9" className="h-[9px] w-[10px]"><path d="M1 0l4 7 4-7" fill="none" stroke="#2a84b8" strokeWidth="2" /></svg>
        </button>
      ))}
      <div className="h-1.5 shrink-0" />
    </aside>
  )
}

const EDGE = '#2c3436'

function Slot({ d }) {
  return (
    <g fill="none" strokeLinecap="round">
      <path d={d} stroke={EDGE} strokeWidth="18.500" />
      <path d={d} stroke="url(#slot)" strokeWidth="17" />
      <path d={d} stroke={EDGE} strokeWidth="7" />
      <path d={d} stroke="#9fb2b8" strokeWidth="5.500" />
    </g>
  )
}

function Channel({ d }) {
  return (
    <g fill="none">
      <path d={d} stroke={EDGE} strokeWidth="13" />
      <path d={d} stroke="url(#chan)" strokeWidth="11.400" />
      <path d={d} stroke="url(#chanCore)" strokeWidth="5" />
      <path d={d} stroke={EDGE} strokeWidth=".8" />
    </g>
  )
}

function Stud({ x, y }) {
  return (
    <g transform={`translate(${x} ${y})`} stroke={EDGE} strokeWidth=".8">
      <rect x="-18" y="-24" width="36" height="48" rx="18" fill="url(#stud)" />
      <rect x="-12" y="-18" width="24" height="36" rx="12" fill="url(#stud)" />
      <rect x="-6.500" y="-12" width="13" height="24" rx="6.500" fill="#a1b4ba" />
      <path d="M-18-6h11.500M6.500-6H18M-18 6h11.500M6.500 6H18" />
    </g>
  )
}

function Viewport() {
  return (
    <svg viewBox="342 167 1578 843" className="h-full min-w-0 flex-1 bg-white" role="img" aria-label="Model view">
      <defs>
        <linearGradient id="chan" gradientUnits="userSpaceOnUse" x1="0" y1="417" x2="0" y2="777">
          <stop offset="0" stopColor="#cfe6ec" />
          <stop offset=".09" stopColor="#c4dbe1" />
          <stop offset=".17" stopColor="#9fb3b9" />
          <stop offset=".84" stopColor="#98abb1" />
          <stop offset=".91" stopColor="#6c7a7e" />
          <stop offset="1" stopColor="#66757a" />
        </linearGradient>
        <linearGradient id="chanCore" gradientUnits="userSpaceOnUse" x1="0" y1="417" x2="0" y2="777">
          <stop offset="0" stopColor="#d6edf2" />
          <stop offset=".09" stopColor="#cfe6ec" />
          <stop offset=".16" stopColor="#8fa2a8" />
          <stop offset=".84" stopColor="#75868a" />
          <stop offset=".92" stopColor="#3b4547" />
          <stop offset="1" stopColor="#3b4547" />
        </linearGradient>
        <linearGradient id="rimOut" x1=".3" y1="0" x2=".45" y2="1">
          <stop offset="0" stopColor="#cfe6ec" />
          <stop offset=".45" stopColor="#a5b9bf" />
          <stop offset=".8" stopColor="#6c7c80" />
          <stop offset="1" stopColor="#566366" />
        </linearGradient>
        <linearGradient id="rimMid" x1=".7" y1="0" x2=".3" y2="1">
          <stop offset="0" stopColor="#9fb2b7" />
          <stop offset=".5" stopColor="#6d7d81" />
          <stop offset="1" stopColor="#3b4547" />
        </linearGradient>
        <linearGradient id="rimIn" x1=".6" y1="0" x2=".4" y2="1">
          <stop offset="0" stopColor="#cfe6ec" />
          <stop offset=".6" stopColor="#9bafb5" />
          <stop offset="1" stopColor="#4a5659" />
        </linearGradient>
        <linearGradient id="bowl" x1=".6" y1="0" x2=".4" y2="1">
          <stop offset="0" stopColor="#3f4a4c" />
          <stop offset=".45" stopColor="#93a6ab" />
          <stop offset="1" stopColor="#cfe8ee" />
        </linearGradient>
        <linearGradient id="slot" x1=".4" y1="0" x2=".6" y2="1">
          <stop offset="0" stopColor="#c9e0e6" />
          <stop offset=".45" stopColor="#a3b7bd" />
          <stop offset="1" stopColor="#5a686c" />
        </linearGradient>
        <linearGradient id="stud" x1="0" y1="0" x2="0" y2="1">
          <stop offset="0" stopColor="#a9bec4" />
          <stop offset=".22" stopColor="#cfe6ec" />
          <stop offset=".5" stopColor="#98abb0" />
          <stop offset=".85" stopColor="#6b7a7e" />
          <stop offset="1" stopColor="#8b9da2" />
        </linearGradient>
        <linearGradient id="pill" x1="0" y1="0" x2="0" y2="1">
          <stop offset="0" stopColor="#c4dbe1" />
          <stop offset=".25" stopColor="#99acb2" />
          <stop offset=".8" stopColor="#8b9da2" />
          <stop offset="1" stopColor="#4c585b" />
        </linearGradient>
        <linearGradient id="pillIn" x1="0" y1="0" x2="0" y2="1">
          <stop offset="0" stopColor="#4f5b5e" />
          <stop offset=".15" stopColor="#93a6ab" />
          <stop offset=".8" stopColor="#9fb2b8" />
          <stop offset="1" stopColor="#cfe8ee" />
        </linearGradient>
      </defs>

      <rect x="862.500" y="371.500" width="602" height="450.500" fill="#a2b4ba" stroke="#333" />
      {[[898.5, 407.500], [1428, 407.500], [898.5, 786], [1428, 786]].map(([x, y]) => (
        <circle key={`${x}-${y}`} cx={x} cy={y} r="15" fill="#fff" stroke="#222" />
      ))}

      <Channel d="M1070 423.500Q1221 420 1363 429Q1388 431 1390 457Q1398 596 1390.700 735Q1388 762 1362 764.500Q1163 777 964 764.500Q938 762 936 735Q931 660 932 560" />
      <Channel d="M1086 447Q1220 444 1349 453Q1366 454 1367 470Q1373 596 1366.700 723Q1365 739 1349 740.600Q1163 752 977 740.600Q962 739 960 723Q956 650 957 580" />
      <path d="M1363 423v12M1350 447v12M1384 457h12M1361 470h12M1385 735h12M1361 723h12M1362 758v12M1349 735v12M964 758v12M977 735v12M930 735h12M954 723h12" stroke={EDGE} />
      <path d="M932 728V580M957 716V595" stroke="#3f4a4d" strokeWidth="4" opacity=".6" />

      {/* round boss */}
      <circle cx="1007" cy="500.500" r="108" fill="url(#rimOut)" stroke={EDGE} />
      <circle cx="1007.500" cy="500.500" r="102" fill="url(#rimMid)" stroke={EDGE} strokeWidth=".7" />
      <circle cx="1010.500" cy="503.500" r="97.500" fill="url(#rimIn)" stroke={EDGE} />
      <circle cx="1010.500" cy="503.500" r="91.500" fill="#a1b4ba" stroke={EDGE} />
      <circle cx="1010.500" cy="503.500" r="51" fill="url(#bowl)" stroke={EDGE} />
      <circle cx="1010.500" cy="503.500" r="45" fill="#a1b4ba" stroke={EDGE} />
      <path d="M1078 416l3 8-4-1 10 8 5 6M1081 418v12M1092 446l7-2 2 10M1099 442v14" fill="none" stroke={EDGE} />
      <path d="M926 578l4-4 5 4M950 596l5-6 6 6" fill="none" stroke={EDGE} />
      <Slot d="M1010.500 431.500A72 72 0 0 1 1073 467.500" />
      <Slot d="M1073 539.500A72 72 0 0 1 1010.500 575.500" />
      <Slot d="M948 539.500A72 72 0 0 1 948 467.500" />

      {/* crescent pocket and obround */}
      <path d="M1184 468A57 57 0 1 1 1184 556z" fill="url(#bowl)" stroke={EDGE} />
      <path d="M1188 470A52 52 0 1 1 1188 554z" fill="url(#bowl)" stroke={EDGE} strokeWidth=".8" />
      <circle cx="1218" cy="512.500" r="44.500" fill="#a1b4ba" stroke={EDGE} strokeWidth=".8" />
      <rect x="1119.500" y="467.500" width="132" height="89" rx="44.500" fill="url(#bowl)" stroke={EDGE} />
      <rect x="1126" y="475" width="119.500" height="75" rx="37" fill="#8c9ea3" stroke={EDGE} strokeWidth=".8" />
      <rect x="1127.500" y="477" width="116.500" height="71" rx="35.500" fill="#a1b4ba" stroke={EDGE} strokeWidth=".8" />

      {/* vertical obround */}
      <rect x="1181.500" y="584.500" width="72" height="138.500" rx="36" fill="url(#pill)" stroke={EDGE} />
      <rect x="1187.500" y="591" width="60" height="126" rx="30" fill="url(#pillIn)" stroke={EDGE} />
      <rect x="1194.500" y="596.500" width="48" height="114" rx="24" fill="#a1b4ba" stroke={EDGE} />
      <path d="M1181 620.500h13M1242 620.500h12M1181 687h13M1242 687h12" stroke={EDGE} />

      {[644.5, 711].map((y) => [1004.5, 1061.500, 1118.500].map((x) => <Stud key={`${x}-${y}`} x={x} y={y} />))}

      {/* stepped wall on the right */}
      <path d="M1315 592h54v64h-66l12-14z" fill="#a9bdc3" stroke={EDGE} strokeWidth=".7" />
      <path d="M1315 600.500h54v48h-60l6-6z" fill="#849295" stroke={EDGE} strokeWidth=".8" />
      <path d="M1366 516h-28q-35 3-35 36v85l-20 20q-10 9-10.500 25v61h14v-61q0-9 8-18l21-21-1-92q2-22 24-23h26q3-6 1.500-12z" fill="#7b8b8f" stroke={EDGE} />
      <path d="M1306 551v87l-21 21q-9 9-9 23v60" fill="none" stroke="#a3b7bd" strokeWidth="5" />
      <path d="M1309 551v88l-21 21q-9 9-9 22v61M1309 552q0-28 29-30h28" fill="none" stroke={EDGE} strokeWidth=".8" />
      <path d="M1338 525h26M1310 647l-17 17" stroke="#3f4a4c" strokeWidth="5" opacity=".7" />
      <path d="M1338 516l6 12M1303 552l11 4M1303 637l12 5M1283 657l11 7M1273 682l13 3" stroke={EDGE} />

      {/* datum csys */}
      <g stroke="#dcdcdc" fill="#dcdcdc">
        <path d="M1163.500 597V520M1163 597h78M1205.500 596v-41h-42" fill="none" />
        <path d="M1163.500 514l3 16h-6zM1246 597l-16-3v6z" stroke="none" />
      </g>
      <g fontFamily="Liberation Sans, sans-serif" fontSize="13" textAnchor="middle">
        <text x="1163.500" y="511" fill="#d4d8d9">Y</text>
        <text x="1253" y="602" fill="#d4d8d9">X</text>
        <text x="1163.500" y="602" fill="#b04848">Z</text>
      </g>

      {/* view triad */}
      <rect x="408.500" y="915" width="27" height="26" fill="#d8d8d8" stroke="#b8b8b8" />
      <path d="M408.500 940V900" stroke="#2a9030" strokeWidth="2" />
      <path d="M408.500 897l3.500 12h-7z" fill="#2a9030" />
      <path d="M410 942h32" stroke="#c83030" strokeWidth="2" />
      <path d="M454 942l-14-3.500v7z" fill="#d02020" />
      <rect x="405" y="938" width="7" height="8" fill="#1a48e8" />
      <g fontFamily="Liberation Sans, sans-serif" fontSize="11" textAnchor="middle">
        <text x="408.500" y="895" fill="#4aa050">Y</text>
        <text x="459" y="946" fill="#d04848">X</text>
      </g>
    </svg>
  )
}

function StatusBar() {
  return (
    <div className="flex h-[22px] shrink-0 items-center border-t border-[#a8a8a8] bg-white pl-[3px] text-[11px] font-bold">
      <p className="pb-1.5 whitespace-nowrap">Select objects and use MB3, or double-click an object</p>
      <Icon name="flag" size="h-[15px] w-[15px]" className="ml-auto" />
      <Icon name="fit" className="mr-[55px] ml-[5px]" />
    </div>
  )
}

const APPS = [
  ['Task View', (
    <>
      <path d="M8 1h16v16H8z" fill="#f0f0f0" />
      <path d="M0 8h16v15H0z" fill="#8a8a8a" opacity=".85" />
    </>
  )],
  ['File Explorer', (
    <>
      <path d="M1 2h8l2 3h12v5H1z" fill="#d99a0c" />
      <path d="M1 6h22v16H1z" fill="#fbcb3c" />
      <path d="M5 16h14v6H5z" fill="#1878d0" />
      <path d="M8 19h8v3H8z" fill="#0c5aa8" />
    </>
  )],
  ['Chrome', (
    <>
      <circle cx="12" cy="12" r="11.500" fill="#fbc116" />
      <path d="M2 6.200A11.500 11.500 0 0 1 22 6.200L12 8z" fill="#e33b2e" />
      <path d="M2 6.200L7.500 15 12 23.500A11.500 11.500 0 0 1 2 6.200z" fill="#2ba24c" />
      <circle cx="12" cy="12" r="6" fill="#fff" />
      <circle cx="12" cy="12" r="4.600" fill="#2f77e8" />
    </>
  ), true],
  ['Edge', (
    <>
      <circle cx="12" cy="12" r="11.500" fill="#1a78cc" />
      <path d="M1 10C2 3 8 .5 12 .5c7 0 11.500 5 11.500 10 0 4-3 6-6 6-3.500 0-4-2-3-4 0-3-2-5-5-5-4 0-7 1-8.500 2.500z" fill="#38c8b4" />
      <path d="M9 10c-3 5 0 11 6 12 3 0 5-1 7-4-6 2-12 0-13-8z" fill="#0c4a98" />
    </>
  )],
  ['Teams', (
    <>
      <circle cx="13" cy="4.500" r="3.500" fill="#7b83eb" />
      <circle cx="20.500" cy="5.500" r="2.500" fill="#5059c9" />
      <path d="M16 9h8v6c0 4-5 5-6 3z" fill="#5059c9" />
      <path d="M7 9h11v8c0 7-10 7-11 0z" fill="#7b83eb" />
      <path d="M1 6h11v12H1z" fill="#4b53bc" />
      <path d="M4 9h5M6.500 9v6.500" stroke="#fff" strokeWidth="1.600" />
    </>
  )],
  ['NX', (
    <>
      <circle cx="12" cy="13" r="9" fill="#1a7ce0" />
      <path d="M5 8c3-3 6-3 7 0s-2 6 2 8-4 6-7 4-5-8-2-12z" fill="#39d8c0" />
      <path d="M2 0l10 2-2 10z" fill="#d81c38" />
      <path d="M3 19c6 3 20-4 20-10 0-2-2-3-5-2M3 19l-2 3 5 0" fill="none" stroke="#f0a020" strokeWidth="2" />
    </>
  ), true],
]

function Taskbar() {
  return (
    <footer className="grid h-12 shrink-0 grid-cols-[1fr_auto_1fr] items-center bg-[linear-gradient(90deg,#14263d_0%,#162a3c_36%,#2a2a2a_46%,#2a2a2a_86%,#1c3236_100%)] text-white">
      <button type="button" className="flex items-center gap-1.5 pl-5 text-left leading-4">
        <svg viewBox="0 0 24 24" className="h-6 w-6">
          <circle cx="11" cy="12" r="10" fill="#f39a1e" />
          <path d="M10 20c-3-1-2-5 1-5 1-4 6-4 7-1 4 0 5 5 1 6z" fill="#c4d8f8" />
        </svg>
        <span className="flex flex-col pb-0.5">
          <span className="text-[12px]">32°C</span>
          <span className="text-[13px] text-[#cfd4da]">대체로 화창</span>
        </span>
      </button>
      <div className="flex items-center">
        <button type="button" aria-label="Start">
          <svg viewBox="0 0 24 24" className="h-6 w-6" fill="#3cb8f8">
            <path d="M0 0h11.500v11.500H0zM12.500 0H24v11.500H12.500zM0 12.500h11.500V24H0zM12.500 12.500H24V24H12.500z" />
          </svg>
        </button>
        <label className="ml-3.5 flex h-[30px] w-[218px] items-center rounded-full bg-[#f2f2f2] pl-2.5 text-[#555]">
          <svg viewBox="0 0 16 16" className="h-4 w-4" fill="none" stroke="#222" strokeWidth="1.700"><circle cx="7" cy="7" r="5.500" /><path d="M11 11l4 4" /></svg>
          <input aria-label="Search" placeholder="검색" className="ml-2.5 min-w-0 flex-1 text-[14px] outline-none placeholder:text-[#666]" />
          <svg viewBox="0 0 44 26" className="mr-0.5 h-[26px] w-11">
            <path d="M0 26c1-6 4-8 9-9 8 0 14 3 15 9z" fill="#22306a" />
            <path d="M8 17l4 6 3-6z" fill="#fff" />
            <path d="M4 12C2 4 7 0 12 1c5 0 7 4 5 12l-2 3H7z" fill="#8f9aac" />
            <ellipse cx="11" cy="10" rx="4" ry="6" fill="#edc3a0" />
            <path d="M27 9h4v17h-4z" fill="#8a4a30" /><path d="M31 6h4v20h-4z" fill="#b85838" /><path d="M35 8h4v18h-4z" fill="#2c7a70" /><path d="M39 6h4v16h-4z" fill="#c84838" />
          </svg>
        </label>
        <div className="ml-[13px] flex gap-5">
          {APPS.map(([name, art, running]) => (
            <button key={name} type="button" aria-label={name} className="flex h-12 flex-col items-center pt-3">
              <svg viewBox="0 0 24 24" className="h-6 w-6">{art}</svg>
              {running && <span className="mt-1 h-[3px] w-1.5 rounded-full bg-[#a8a8a8]" />}
            </button>
          ))}
        </div>
      </div>
      <div className="flex items-center justify-end pr-[19px]">
        <svg viewBox="0 0 12 8" className="h-2 w-3" fill="none" stroke="#fff" strokeWidth="1.700"><path d="M1 7l5-5 5 5" /></svg>
        <span className="ml-5 text-[20px] leading-5 font-light">A</span>
        <svg viewBox="0 0 18 18" className="ml-[18px] h-[18px] w-[18px]" fill="none" stroke="#fff" strokeWidth="1.200">
          <path d="M10 2H2v11h12V9M5 16h8M8 13v3M12 2h4v4h-4zM14 6v9" />
        </svg>
        <svg viewBox="0 0 18 16" className="ml-1.5 h-4 w-[18px]" fill="none" stroke="#fff" strokeWidth="1.200">
          <path d="M1 6h3l4-4v12l-4-4H1zM11 6l4 4M15 6l-4 4" />
        </svg>
        <div className="ml-4 pb-0.5 text-right text-[12px] leading-4">
          <div>오후 4:20</div>
          <div>2025-08-28</div>
        </div>
      </div>
    </footer>
  )
}

export default function App() {
  return (
    <div className="flex h-screen flex-col overflow-hidden bg-white font-['Noto_Sans_CJK_KR',sans-serif] text-[11px] leading-4 text-[#222]">
      <TitleBar />
      <TabBar />
      <Ribbon />
      <SelectionBar />
      <main className="flex min-h-0 flex-1">
        <ResourceBar />
        <PartNavigator />
        <Viewport />
      </main>
      <StatusBar />
      <Taskbar />
    </div>
  )
}
